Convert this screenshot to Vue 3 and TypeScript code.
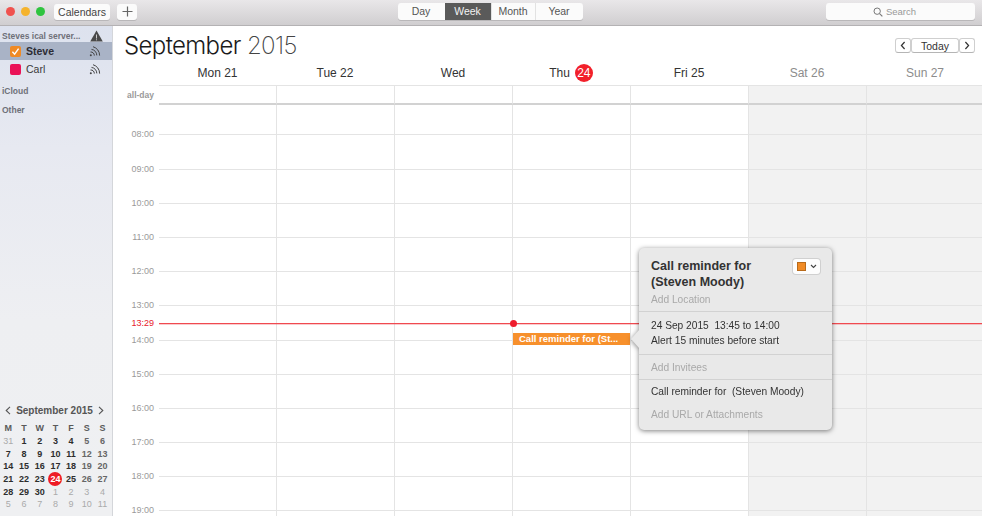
<script setup lang="ts">
const views = ['Day', 'Week', 'Month', 'Year']
const dow = ['M', 'T', 'W', 'T', 'F', 'S', 'S']
const days = [
  { label: 'Mon 21' }, { label: 'Tue 22' }, { label: 'Wed' },
  { label: 'Thu', badge: '24' }, { label: 'Fri 25' },
  { label: 'Sat 26', weekend: true }, { label: 'Sun 27', weekend: true },
]
const hours = ['08:00','09:00','10:00','11:00','12:00','13:00','14:00','15:00','16:00','17:00','18:00','19:00']
const colIdx = [0, 1, 2, 3, 4, 5, 6]
const mini: { n: number; out?: boolean }[] = []
mini.push({ n: 31, out: true })
for (let i = 1; i <= 30; i++) mini.push({ n: i })
for (let i = 1; i <= 11; i++) mini.push({ n: i, out: true })
function miniClass(d: { n: number; out?: boolean }, i: number) {
  return {
    out: d.out,
    wknd: !d.out && i % 7 >= 5,
    today: !d.out && d.n === 24,
  }
}
const cals = [
  { name: 'Steve', color: '#f08a24', checked: true },
  { name: 'Carl', color: '#ea1257', checked: false },
]
</script>

<template>
  <div class="win">
    <header class="toolbar">
      <div class="tb-left">
        <span class="light red"></span><span class="light yellow"></span><span class="light green"></span>
        <button class="btn cal-btn">Calendars</button>
        <button class="btn plus-btn">
          <svg width="11" height="11" viewBox="0 0 11 11"><path d="M5.5 .5v10M.5 5.5h10" stroke="#666" stroke-width="1.2" fill="none"/></svg>
        </button>
      </div>
      <div class="seg">
        <span v-for="v in views" :key="v" class="seg-item" :class="{ on: v === 'Week' }">{{ v }}</span>
      </div>
      <div class="tb-right">
        <div class="search">
          <svg width="10" height="10" viewBox="0 0 11 11"><circle cx="4.6" cy="4.6" r="3.5" stroke="#777" stroke-width="1.1" fill="none"/><path d="M7.2 7.2l3.1 3.1" stroke="#777" stroke-width="1.2"/></svg>
          <span>Search</span>
        </div>
      </div>
    </header>

    <div class="body">
      <aside class="side">
        <div class="group-head first">
          <span>Steves ical server...</span>
          <svg width="13" height="12" viewBox="0 0 13 12"><path d="M6.5 .5L12.8 11.5H.2z" fill="#4a4a4a"/><path d="M6.5 4.5v4M6.5 9.3v1" stroke="#ddd" stroke-width=".9"/></svg>
        </div>
        <div v-for="c in cals" :key="c.name" class="cal-row" :class="{ sel: c.checked }">
          <span class="chk" :style="{ background: c.color }">
            <svg v-if="c.checked" width="9" height="9" viewBox="0 0 9 9"><path d="M1.4 4.8l2.2 2.4 4-5.6" stroke="#fff" stroke-width="1.4" fill="none"/></svg>
          </span>
          <span class="cal-name">{{ c.name }}</span>
          <svg class="sig" width="13" height="12" viewBox="0 0 13 12" fill="none" stroke="#444" stroke-width="1"><circle cx="1.8" cy="10.2" r="1" fill="#444" stroke="none"/><path d="M1.5 7a3.4 3.4 0 0 1 3.8 3.6M2.5 4.4a6 6 0 0 1 5.3 6M4 1.7a9 9 0 0 1 6.6 8.9"/></svg>
        </div>
        <div class="group-head icloud">iCloud</div>
        <div class="group-head other">Other</div>

        <div class="mini">
          <div class="mini-head">
            <svg width="6" height="9" viewBox="0 0 6 9"><path d="M5 .8L1.2 4.5 5 8.2" stroke="#555" stroke-width="1.1" fill="none"/></svg>
            <span>September 2015</span>
            <svg width="6" height="9" viewBox="0 0 6 9"><path d="M1 .8l3.8 3.7L1 8.2" stroke="#555" stroke-width="1.1" fill="none"/></svg>
          </div>
          <div class="mini-grid">
            <span v-for="(d, i) in dow" :key="'d' + i" class="mini-dow">{{ d }}</span>
            <span v-for="(d, i) in mini" :key="i" class="mini-day" :class="miniClass(d, i)">{{ d.n }}</span>
          </div>
        </div>
      </aside>

      <main class="main">
        <div class="title-row">
          <h1 class="title">September <span class="yr">2015</span></h1>
          <div class="nav">
            <button class="nav-btn arrow"><svg width="6" height="9" viewBox="0 0 6 9"><path d="M4.6 1L1.4 4.5l3.2 3.5" stroke="#333" stroke-width="1.2" fill="none"/></svg></button>
            <button class="nav-btn today">Today</button>
            <button class="nav-btn arrow"><svg width="6" height="9" viewBox="0 0 6 9"><path d="M1.4 1l3.2 3.5L1.4 8" stroke="#333" stroke-width="1.2" fill="none"/></svg></button>
          </div>
        </div>
        <div class="day-head">
          <div class="gutter"></div>
          <div v-for="(d, i) in days" :key="d.label" class="day-label" :class="{ wk: d.weekend, firstcol: i === 0 }">
            {{ d.label }}<span v-if="d.badge" class="badge">{{ d.badge }}</span>
          </div>
        </div>
        <div class="allday">
          <div class="gutter ad-label">all-day</div>
          <div v-for="i in colIdx" :key="i" class="ad-cell" :class="{ wkbg: i >= 5, nob: i === 0 }"></div>
        </div>
        <div class="grid">
          <div class="row first">
            <div class="gutter"></div>
            <div v-for="i in colIdx" :key="i" class="cell" :class="{ wkbg: i >= 5, nob: i === 0 }"></div>
          </div>
          <div v-for="h in hours" :key="h" class="row">
            <div class="gutter"><span class="hour">{{ h }}</span></div>
            <div v-for="i in colIdx" :key="i" class="cell line" :class="{ wkbg: i >= 5, nob: i === 0 }"></div>
          </div>
          <div class="now">
            <span class="now-label">13:29</span>
            <span class="now-dot"></span>
          </div>
          <div class="event">Call reminder for (St...</div>
        </div>
      </main>
    </div>

    <div class="pop">
      <section class="pop-sec s1">
        <div class="pop-top">
          <div class="pop-title">Call reminder for<br />(Steven Moody)</div>
          <div class="pick">
            <span class="pick-sw"></span>
            <svg width="7" height="5" viewBox="0 0 7 5"><path d="M1 1l2.5 2.5L6 1" stroke="#444" stroke-width="1.1" fill="none"/></svg>
          </div>
        </div>
        <div class="ghost loc">Add Location</div>
      </section>
      <section class="pop-sec s2">
        <div>24 Sep 2015&nbsp; 13:45 to 14:00</div>
        <div class="alert">Alert 15 minutes before start</div>
      </section>
      <section class="pop-sec s3"><div class="ghost">Add Invitees</div></section>
      <section class="pop-sec s4">
        <div>Call reminder for&nbsp; (Steven Moody)</div>
        <div class="ghost url">Add URL or Attachments</div>
      </section>
    </div>
  </div>
</template>

<style scoped>
.win {
  position: relative;
  width: 982px;
  height: 516px;
  overflow: hidden;
  background: #fff;
  font-family: "Liberation Sans", Arial, sans-serif;
  color: #333;
}
button { font-family: inherit; padding: 0; margin: 0; }
.toolbar {
  height: 26px;
  box-sizing: border-box;
  display: grid;
  grid-template-columns: 1fr auto 1fr;
  align-items: start;
  padding-top: 3px;
  background: linear-gradient(#e9e7e9, #d0ced0);
  border-bottom: 1px solid #b4b2b4;
}
.tb-left { display: flex; align-items: center; height: 17px; padding-left: 6px; }
.light { width: 9px; height: 9px; border-radius: 50%; margin-right: 6px; }
.red { background: #f0524e; }
.yellow { background: #f5b32c; }
.green { background: #2fc43f; margin-right: 0; }
.btn {
  height: 16px;
  border: 0;
  border-radius: 3px;
  background: #fbfbfb;
  box-shadow: 0 1px 0 #b9b7b9;
  font-size: 10.5px;
  color: #444;
}
.cal-btn { width: 56px; margin-left: 9px; }
.plus-btn { width: 20px; margin-left: 7px; display: flex; align-items: center; justify-content: center; }
.seg {
  display: flex;
  height: 17px;
  width: 185px;
  margin-left: -2px;
  border-radius: 3px;
  background: #fbfbfb;
  box-shadow: 0 1px 0 #b9b7b9;
  overflow: hidden;
}
.seg-item {
  font-size: 10.5px;
  line-height: 17px;
  text-align: center;
  color: #555;
  border-left: 1px solid #e2e2e2;
  box-sizing: border-box;
}
.seg-item:nth-child(1) { border-left: 0; width: 47px; }
.seg-item:nth-child(2) { width: 46px; }
.seg-item:nth-child(3) { width: 44px; }
.seg-item:nth-child(4) { width: 48px; }
.seg-item.on { background: #5a5a5a; color: #f2f2f2; border-left: 0; }
.tb-right { display: flex; justify-content: flex-end; padding-right: 7px; }
.search {
  width: 149px;
  height: 17px;
  box-sizing: border-box;
  padding-right: 12px;
  border-radius: 3px;
  background: #fbfbfb;
  box-shadow: 0 1px 0 #b9b7b9;
  display: flex;
  align-items: center;
  justify-content: center;
  gap: 3px;
  font-size: 9.5px;
  color: #999;
}
.body { display: flex; height: 490px; }
.side {
  width: 113px;
  flex: none;
  box-sizing: border-box;
  border-right: 1px solid #d4d6da;
  display: flex;
  flex-direction: column;
  background: linear-gradient(#dde2ee 0, #e7e9f1 25%, #eeeff2 60%, #eff0f2 100%);
}
.group-head {
  font-size: 8.5px;
  font-weight: 700;
  color: #6e7078;
  padding-left: 2px;
  line-height: 12px;
}
.group-head.first {
  display: flex;
  justify-content: space-between;
  align-items: center;
  padding-right: 9px;
  padding-top: 3px;
  height: 13px;
}
.group-head.icloud { margin-top: 7px; }
.group-head.other { margin-top: 7px; }
.cal-row {
  height: 18px;
  display: flex;
  align-items: center;
  padding-left: 10px;
  padding-right: 10px;
  font-size: 10.5px;
  color: #3a3a3a;
}
.cal-row.sel { background: #a9b3c6; font-weight: 700; color: #2c2c34; }
.chk {
  width: 11px;
  height: 11px;
  border-radius: 2px;
  display: flex;
  align-items: center;
  justify-content: center;
  margin-right: 5px;
}
.cal-name { flex: 1; }
.mini { margin-top: auto; padding-bottom: 5px; }
.mini-head {
  display: flex;
  align-items: center;
  justify-content: space-between;
  padding: 0 8px 0 5px;
  font-size: 10px;
  font-weight: 700;
  color: #555;
  height: 14px;
  margin-bottom: 5px;
}
.mini-grid {
  display: grid;
  grid-template-columns: repeat(7, 15.7px);
  grid-auto-rows: 12.7px;
  padding-left: .5px;
  font-size: 9px;
  text-align: center;
  line-height: 12.7px;
}
.mini-dow { font-weight: 700; color: #5a5a5a; }
.mini-day { font-weight: 700; color: #2d2d2d; }
.mini-day.out { color: #aaa; font-weight: 400; }
.mini-day.wknd { color: #666; }
.mini-day.today {
  background: #ee1c25;
  color: #fff;
  border-radius: 50%;
  width: 14px;
  height: 14px;
  line-height: 14px;
  margin-left: .85px;
  margin-top: -.6px;
}
.main { flex: 1; min-width: 0; }
.title-row {
  height: 35px;
  display: flex;
  justify-content: space-between;
  padding: 0 7px 0 11px;
}
.title {
  margin: 5px 0 0;
  font-family: Inter, "Liberation Sans", sans-serif;
  font-weight: 300;
  font-size: 24px;
  line-height: 30px;
  letter-spacing: -.62px;
  color: #1a1a1a;
}
.yr { font-weight: 200; color: #444; }
.nav { display: flex; height: 15px; margin-top: 12px; }
.nav-btn {
  height: 15px;
  background: #fff;
  border: 1px solid #cfcfcf;
  border-bottom-color: #b5b5b5;
  border-radius: 3px;
  font-size: 10.5px;
  color: #333;
  display: flex;
  align-items: center;
  justify-content: center;
}
.arrow { width: 16px; }
.today { width: 48px; }
.gutter { width: 45px; flex: none; }
.day-head { display: flex; height: 25px; }
.day-label {
  width: 118px;
  flex: none;
  box-sizing: border-box;
  border-bottom: 1px solid #e4e4e4;
  text-align: center;
  font-size: 12px;
  line-height: 24px;
  color: #333;
}
.day-label.firstcol { width: 117px; margin-left: 1px; }
.day-label.wk { color: #8c8c8c; }
.badge {
  display: inline-block;
  width: 18px;
  height: 18px;
  margin-left: 5px;
  border-radius: 50%;
  background: #f2202a;
  color: #fff;
  line-height: 18px;
  font-size: 12px;
  text-align: center;
}
.allday { display: flex; height: 19px; }
.ad-label {
  font-size: 8.5px;
  font-weight: 700;
  color: #9a9a9a;
  text-align: right;
  padding-right: 4px;
  box-sizing: border-box;
  line-height: 19px;
}
.ad-cell {
  width: 118px;
  flex: none;
  border-left: 1px solid #e4e4e4;
  border-bottom: 2px solid #d2d2d2;
  box-sizing: border-box;
}
.wkbg { background: #f2f2f2; }
.grid { position: relative; }
.row { display: flex; height: 34.2px; }
.row.first { height: 29.4px; }
.cell { width: 118px; flex: none; border-left: 1px solid #e4e4e4; box-sizing: border-box; }
.cell.line { border-top: 1px solid #e4e4e4; }
.ad-cell.nob, .cell.nob { border-left: 0; width: 117px; margin-left: 1px; }
.hour {
  display: block;
  margin-top: -6px;
  font-size: 9px;
  line-height: 12px;
  color: #9a9a9a;
  text-align: right;
  padding-right: 4px;
  background: #fff;
}
.now {
  position: absolute;
  top: 218px;
  left: 46px;
  right: 0;
  height: 1px;
  background: #f04a50;
  box-shadow: 0 1px 0 rgba(240, 80, 90, .3);
}
.now-label {
  position: absolute;
  right: 100%;
  top: -6px;
  padding-right: 5px;
  font-size: 9px;
  line-height: 12px;
  color: #e8202a;
  background: #fff;
}
.now-dot {
  position: absolute;
  left: 351px;
  top: -3px;
  width: 7px;
  height: 7px;
  border-radius: 50%;
  background: #ee1c2c;
}
.event {
  position: absolute;
  left: 400px;
  top: 228px;
  width: 117px;
  height: 12px;
  box-sizing: border-box;
  padding-left: 6px;
  background: #f7902c;
  color: #fff;
  font-size: 9.5px;
  font-weight: 700;
  line-height: 12px;
  white-space: nowrap;
  overflow: hidden;
}
.pop {
  position: absolute;
  left: 639px;
  top: 248px;
  width: 193px;
  height: 182px;
  box-sizing: border-box;
  background: #e9e9e9;
  border-radius: 5px;
  filter: drop-shadow(0 1px 2.5px rgba(0, 0, 0, .5));
  font-size: 10.2px;
  line-height: 12px;
  color: #333;
  display: flex;
  flex-direction: column;
}
.pop::before {
  content: "";
  position: absolute;
  left: -8px;
  top: 82px;
  width: 8px;
  height: 18px;
  background: #e9e9e9;
  clip-path: polygon(100% 0, 0 50%, 100% 100%);
}
.pop-sec { padding: 0 12px; border-top: 1px solid #d2d2d2; box-sizing: border-box; }
.pop-sec.s1 { border-top: 0; height: 63px; padding-top: 10px; }
.pop-sec.s2 { height: 43px; padding-top: 8px; }
.pop-sec.s3 { height: 25px; padding-top: 7px; }
.pop-sec.s4 { flex: 1; padding-top: 6px; }
.pop-top { display: flex; justify-content: space-between; align-items: flex-start; }
.pop-title { font-size: 12.5px; font-weight: 700; line-height: 16px; color: #333; }
.pick {
  width: 27px;
  height: 15px;
  margin-top: 1px;
  background: #fdfdfd;
  border-radius: 3px;
  box-shadow: 0 0 0 1px #d0d0d0;
  display: flex;
  align-items: center;
  justify-content: center;
  gap: 4px;
}
.pick-sw { width: 7px; height: 7px; background: #f08a24; border: .5px solid #b86a1a; }
.ghost { color: #a9a9a9; }
.loc { margin-top: 4px; }
.alert { margin-top: 3px; }
.url { margin-top: 11px; }
</style>
